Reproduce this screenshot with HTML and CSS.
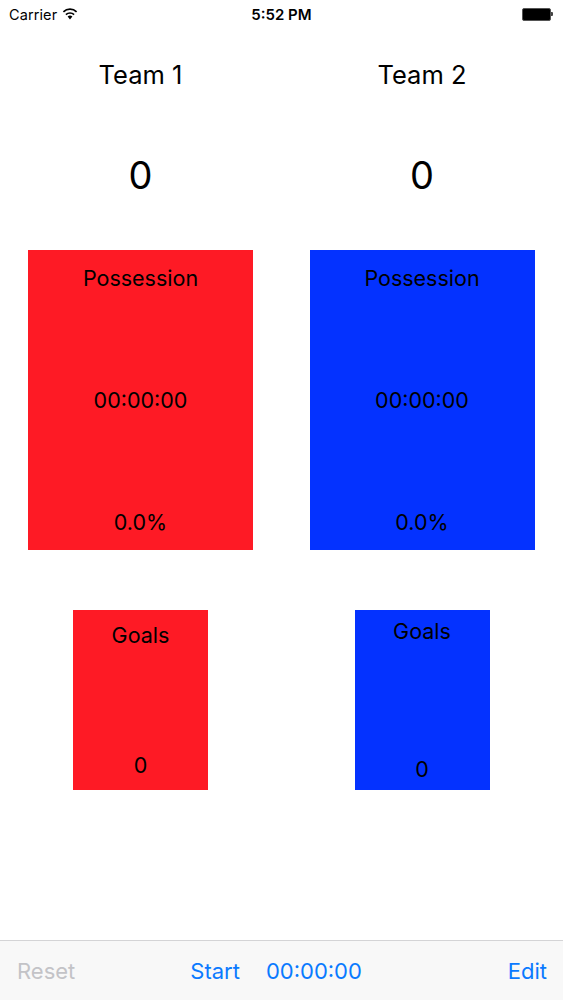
FILE: index.html
```html
<!DOCTYPE html>
<html>
<head>
<meta charset="utf-8">
<link rel="stylesheet" href="styles.css">
</head>
<body>
<div class="screen">
  <div class="statusbar">
    <div class="carrier">Carrier
      <svg class="wifi" width="16" height="12" viewBox="0 0 16 12">
        <path d="M8 11.5 L5.6 8.6 A3.6 3.6 0 0 1 10.4 8.6 Z" fill="#000"/>
        <path d="M3.9 6.6 A6 6 0 0 1 12.1 6.6" stroke="#000" stroke-width="1.7" fill="none"/>
        <path d="M1.4 3.8 A9.6 9.6 0 0 1 14.6 3.8" stroke="#000" stroke-width="1.7" fill="none"/>
      </svg>
    </div>
    <div class="time">5:52 PM</div>
    <div class="battery"><span class="battery-body"></span><span class="battery-tip"></span></div>
  </div>

  <div class="teams">
    <div class="team">
      <div class="team-name">Team 1</div>
      <div class="score">0</div>
      <div class="possession red">
        <div class="label">Possession</div>
        <div class="label">00:00:00</div>
        <div class="label">0.0%</div>
      </div>
      <div class="goals red goals-left">
        <div class="label">Goals</div>
        <div class="label">0</div>
      </div>
    </div>
    <div class="team">
      <div class="team-name">Team 2</div>
      <div class="score">0</div>
      <div class="possession blue">
        <div class="label">Possession</div>
        <div class="label">00:00:00</div>
        <div class="label">0.0%</div>
      </div>
      <div class="goals blue goals-right">
        <div class="label">Goals</div>
        <div class="label">0</div>
      </div>
    </div>
  </div>

  <div class="toolbar">
    <span class="tb-item disabled">Reset</span>
    <span class="tb-item start">Start</span>
    <span class="tb-item timer">00:00:00</span>
    <span class="tb-item edit">Edit</span>
  </div>
</div>
</body>
</html>
```
FILE: styles.css
```css
html, body {
  margin: 0;
  padding: 0;
  background: #fff;
}
body {
  font-family: "Inter", "Liberation Sans", sans-serif;
  color: #000;
}
.screen {
  width: 563px;
  height: 1000px;
  display: flex;
  flex-direction: column;
  overflow: hidden;
}
.statusbar {
  height: 28px;
  display: flex;
  align-items: center;
  justify-content: space-between;
  padding: 0 10px 0 9px;
  font-size: 14.5px;
  position: relative;
}
.carrier {
  display: flex;
  align-items: center;
  gap: 5px;
  letter-spacing: 0.1px;
}
.wifi {
  margin-top: -1px;
}
.time {
  font-weight: 600;
  font-size: 15px;
  position: absolute;
  left: 0;
  right: 0;
  text-align: center;
  pointer-events: none;
}
.battery {
  display: flex;
  align-items: center;
}
.battery-body {
  width: 27px;
  height: 11px;
  background: #000;
  border: 1px solid #555;
  border-radius: 2px;
}
.battery-tip {
  width: 2px;
  height: 4px;
  background: #444;
  border-radius: 0 1px 1px 0;
}
.teams {
  display: grid;
  grid-template-columns: 281px 282px;
  padding-top: 32px;
}
.team {
  display: flex;
  flex-direction: column;
  align-items: center;
}
.team-name {
  font-size: 25.5px;
  line-height: 30px;
  height: 30px;
}
.score {
  font-size: 38px;
  line-height: 44px;
  margin-top: 63px;
}
.possession {
  margin-top: 53px;
  width: 225px;
  height: 300px;
  box-sizing: border-box;
  padding: 16px 0 16px;
  display: flex;
  flex-direction: column;
  justify-content: space-between;
  align-items: center;
}
.label {
  font-size: 21.5px;
  line-height: 24px;
}
.goals {
  margin-top: 60px;
  width: 135px;
  height: 180px;
  box-sizing: border-box;
  display: flex;
  flex-direction: column;
  justify-content: space-between;
  align-items: center;
}
.goals-left {
  padding: 13px 0 13px;
}
.goals-right {
  padding: 9px 0 9px;
}
.red {
  background: #fe1a25;
}
.blue {
  background: #0432ff;
}
.toolbar {
  margin-top: auto;
  height: 59px;
  border-top: 1px solid #d4d4d6;
  background: #f8f8f8;
  display: flex;
  align-items: center;
  padding: 0 16px 0 17px;
  font-size: 22px;
  color: #0a7aff;
}
.tb-item.disabled {
  color: #c3c3c7;
}
.start {
  margin-left: 115px;
}
.timer {
  margin-left: 26px;
}
.edit {
  margin-left: auto;
}
```
